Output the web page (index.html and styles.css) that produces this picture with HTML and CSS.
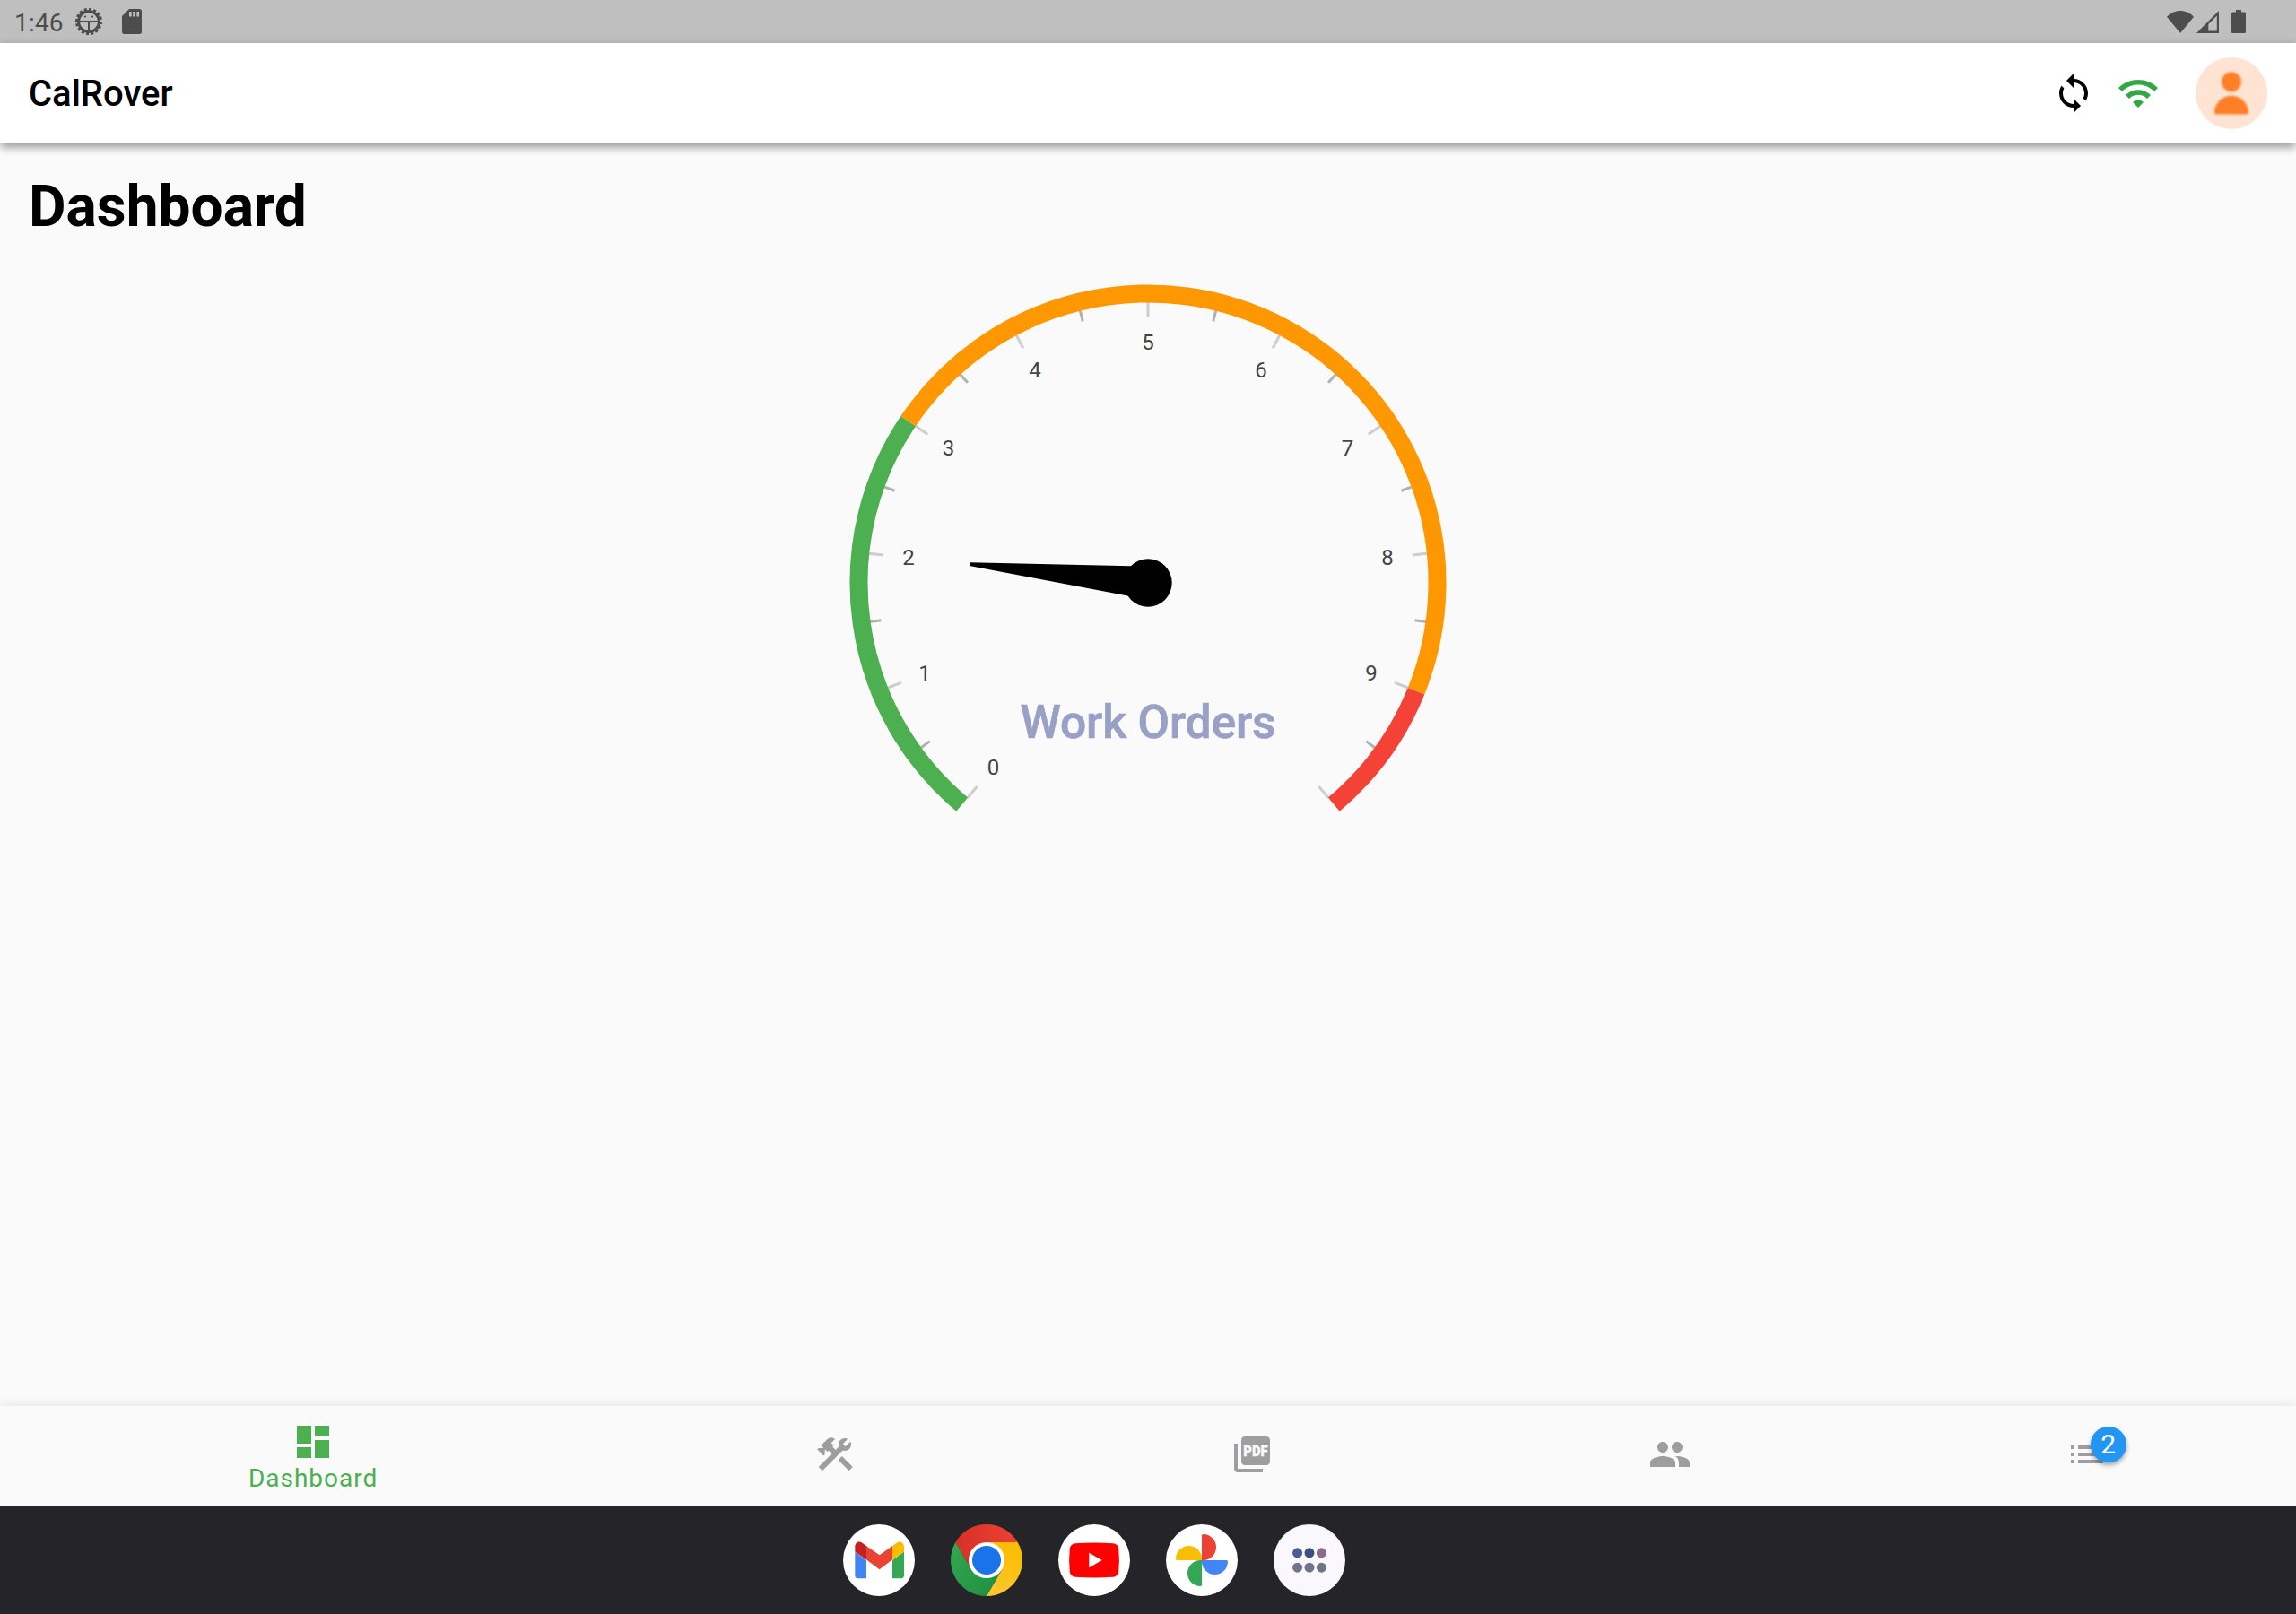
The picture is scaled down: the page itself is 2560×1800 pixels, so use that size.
FILE: index.html
```html
<!DOCTYPE html>
<html lang="en">
<head>
<meta charset="utf-8">
<title>CalRover</title>
<link rel="stylesheet" href="styles.css">
</head>
<body>
<div class="screen">
  <div class="status-bar">
    <span class="clock">1:46</span>
    <svg class="status-gear" viewBox="-16 -16 32 32">
      <circle class="gear-ring" r="11.500"/>
      <circle class="gear-teeth" r="13.600" pathLength="64"/>
      <path class="gear-lines" d="M-11 0H11M0 0V11"/>
      <circle cx="-4" cy="-5.500" r="1.100"/><circle cx="4" cy="-5.500" r="1.100"/>
    </svg>
    <svg class="status-card" viewBox="0 0 22 28"><path fill-rule="evenodd" d="M8 0H19.500A2.500 2.500 0 0 1 22 2.500V25.500A2.500 2.500 0 0 1 19.500 28H2.500A2.500 2.500 0 0 1 0 25.500V8ZM8 3V8.500H10.700V3ZM12.200 3V8.500H14.900V3ZM16.400 3V8.500H19V3Z"/></svg>
    <div class="status-right">
      <svg class="status-wifi" viewBox="0 0 30 25"><path d="M15 25L0 6.800C8-2.200 22-2.200 30 6.800Z"/></svg>
      <svg class="status-signal" viewBox="0 0 25 25"><path fill-rule="evenodd" d="M25 0V25H0ZM22.800 5.400L13.300 14.900V22.600H22.800Z"/></svg>
      <svg class="status-battery" viewBox="0 0 16 26"><path d="M5 0H11V2.500H14.500A1.500 1.500 0 0 1 16 4V24.500A1.500 1.500 0 0 1 14.500 26H1.500A1.500 1.500 0 0 1 0 24.500V4A1.500 1.500 0 0 1 1.500 2.500H5Z"/></svg>
    </div>
  </div>

  <header class="app-bar">
    <span class="app-title">CalRover</span>
    <div class="app-actions">
      <svg class="icon" viewBox="0 0 24 24"><path d="M12 4V1L8 5l4 4V6c3.310 0 6 2.690 6 6 0 1.010-.25 1.970-.7 2.800l1.460 1.460C19.540 15.030 20 13.570 20 12c0-4.420-3.580-8-8-8zm0 14c-3.310 0-6-2.690-6-6 0-1.010.25-1.970.7-2.800L5.240 7.740C4.460 8.970 4 10.430 4 12c0 4.420 3.580 8 8 8v3l4-4-4-4v3z"/></svg>
      <svg class="icon icon-online" viewBox="0 0 24 24"><path d="M1 9l2 2c4.970-4.970 13.030-4.970 18 0l2-2C16.930 2.930 7.080 2.930 1 9zm8 8l3 3 3-3c-1.650-1.660-4.340-1.660-6 0zm-4-4l2 2c2.760-2.760 7.240-2.760 10 0l2-2C15.140 9.140 8.870 9.140 5 13z"/></svg>
      <svg class="avatar" viewBox="0 0 80 80">
        <circle class="avatar-bg" cx="40" cy="40" r="40"/>
        <g class="avatar-person"><circle cx="40" cy="27.200" r="11"/><path d="M21 61V59.500C22.500 50 30 42.700 40 42.700S57.500 50 59 59.500V61Q59 63.500 56.500 63.500H23.500Q21 63.500 21 61Z"/></g>
      </svg>
    </div>
  </header>

  <main class="content">
    <h1 class="page-title">Dashboard</h1>
    <svg class="gauge" viewBox="-340 -340 680 680">
      <g class="major">
        <path d="M296.500 0H313" transform="rotate(130)"/><path d="M296.500 0H313" transform="rotate(158)"/>
        <path d="M296.500 0H313" transform="rotate(186)"/><path d="M296.500 0H313" transform="rotate(214)"/>
        <path d="M296.500 0H313" transform="rotate(242)"/><path d="M296.500 0H313" transform="rotate(270)"/>
        <path d="M296.500 0H313" transform="rotate(298)"/><path d="M296.500 0H313" transform="rotate(326)"/>
        <path d="M296.500 0H313" transform="rotate(354)"/><path d="M296.500 0H313" transform="rotate(22)"/>
        <path d="M296.500 0H313" transform="rotate(50)"/>
      </g>
      <g class="minor">
        <path d="M300.500 0H313" transform="rotate(144)"/><path d="M300.500 0H313" transform="rotate(172)"/>
        <path d="M300.500 0H313" transform="rotate(200)"/><path d="M300.500 0H313" transform="rotate(228)"/>
        <path d="M300.500 0H313" transform="rotate(256)"/><path d="M300.500 0H313" transform="rotate(284)"/>
        <path d="M300.500 0H313" transform="rotate(312)"/><path d="M300.500 0H313" transform="rotate(340)"/>
        <path d="M300.500 0H313" transform="rotate(8)"/><path d="M300.500 0H313" transform="rotate(36)"/>
      </g>
      <path class="range range-low" d="M-207.300 247.050A322.500 322.500 0 0 1 -267.370 -180.340"/>
      <path class="range range-mid" d="M-267.370 -180.340A322.500 322.500 0 0 1 299.020 120.810"/>
      <path class="range range-high" d="M299.020 120.810A322.500 322.500 0 0 1 207.300 247.050"/>
      <g class="labels">
        <text x="-172.600" y="214.200">0</text><text x="-249" y="109.100">1</text><text x="-267" y="-19.600">2</text>
        <text x="-222.600" y="-141.600">3</text><text x="-126.100" y="-228.600">4</text><text x="0" y="-260">5</text>
        <text x="126.100" y="-228.600">6</text><text x="222.600" y="-141.600">7</text><text x="267" y="-19.600">8</text>
        <text x="249" y="109.100">9</text>
      </g>
      <text class="gauge-title" x="0" y="173" textLength="285" lengthAdjust="spacing">Work Orders</text>
      <path d="M0 -18.400L200 -1.900V1.900L0 18.400Z" transform="rotate(186)"/>
      <circle r="26.700"/>
    </svg>
  </main>

  <nav class="bottom-nav">
    <div class="nav-item active">
      <svg class="icon" viewBox="0 0 24 24"><path d="M3 13h8V3H3v10zm0 8h8v-6H3v6zm10 0h8V11h-8v10zm0-18v6h8V3h-8z"/></svg>
      <span class="nav-label">Dashboard</span>
    </div>
    <div class="nav-item">
      <svg class="icon" viewBox="0 0 24 24"><rect height="8.480" transform="matrix(0.7071 -0.7071 0.7071 0.7071 -6.8717 17.6255)" width="3" x="16.340" y="12.870"/><path d="M17.500 10c1.930 0 3.500-1.570 3.500-3.500 0-.58-.16-1.120-.41-1.600l-2.700 2.700-1.490-1.490 2.700-2.700c-.48-.25-1.020-.41-1.600-.41C15.570 3 14 4.570 14 6.500c0 .41.08.8.21 1.160l-1.850 1.850-1.780-1.780.71-.71-1.410-1.410L12 3.490a3 3 0 0 0-4.240 0L4.220 7.030l1.410 1.410H2.810l-.71.71 3.540 3.540.71-.71V9.150l1.410 1.410.71-.71 1.780 1.780-7.410 7.410 2.120 2.120L16.340 9.790c.36.130.75.210 1.160.210z"/></svg>
    </div>
    <div class="nav-item">
      <svg class="icon" viewBox="0 0 24 24"><path d="M20 2H8c-1.100 0-2 .9-2 2v12c0 1.100.9 2 2 2h12c1.100 0 2-.9 2-2V4c0-1.100-.9-2-2-2zM4 6H2v14c0 1.100.9 2 2 2h14v-2H4V6z"/><text class="pdf-text" x="7.100" y="12.900" textLength="13.800" lengthAdjust="spacingAndGlyphs">PDF</text></svg>
    </div>
    <div class="nav-item">
      <svg class="icon" viewBox="0 0 24 24"><path d="M16 11c1.660 0 2.990-1.340 2.990-3S17.660 5 16 5c-1.660 0-3 1.340-3 3s1.340 3 3 3zm-8 0c1.660 0 2.990-1.340 2.990-3S9.660 5 8 5C6.340 5 5 6.340 5 8s1.340 3 3 3zm0 2c-2.330 0-7 1.170-7 3.500V19h14v-2.500c0-2.330-4.670-3.500-7-3.500zm8 0c-.29 0-.62.020-.97.050 1.160.84 1.970 1.970 1.970 3.450V19h6v-2.500c0-2.330-4.670-3.500-7-3.500z"/></svg>
    </div>
    <div class="nav-item">
      <div class="badged">
        <svg class="icon" viewBox="0 0 24 24"><path d="M3 13h2v-2H3v2zm0 4h2v-2H3v2zm0-8h2V7H3v2zm4 4h14v-2H7v2zm0 4h14v-2H7v2zM7 7v2h14V7H7z"/></svg>
        <span class="badge">2</span>
      </div>
    </div>
  </nav>

  <footer class="taskbar">
    <svg class="app-icon" viewBox="-40 -40 80 80">
      <circle r="40" fill="#fff"/>
      <path fill="#4285f4" d="M-26.700 -9.500L-14 0V20.200H-23.500A3.200 3.200 0 0 1 -26.700 17Z"/>
      <path fill="#34a853" d="M28 -9.500L15 0V20.200H24.500A3.200 3.200 0 0 0 28 17Z"/>
      <path fill="#ea4335" d="M-14.200 -15.900L.6 -5.700L15.200 -15.900V-.7L.6 10.200L-14.200 -.7Z"/>
      <path fill="#c5221f" d="M-26.700 -9.500V-15C-26.700 -20 -22 -22 -18.300 -19L-14 -15.900V-.5Z"/>
      <path fill="#fbbc04" d="M28 -9.500V-15C28 -20 23 -22 19.500 -19L15 -15.900V-.5Z"/>
    </svg>
    <svg class="app-icon" viewBox="-40 -40 80 80">
      <defs>
        <linearGradient id="chrome-red" x1="0" x2="1"><stop offset="0" stop-color="#d93025"/><stop offset="1" stop-color="#ea4335"/></linearGradient>
        <linearGradient id="chrome-yellow" x1="0" y1="1" x2=".4" y2="0"><stop offset="0" stop-color="#fcc934"/><stop offset="1" stop-color="#fbbc04"/></linearGradient>
        <linearGradient id="chrome-green" x1="1" y1="1" x2="0" y2="0"><stop offset="0" stop-color="#1e8e3e"/><stop offset="1" stop-color="#34a853"/></linearGradient>
      </defs>
      <path fill="url(#chrome-red)" d="M-34.640 -20A40 40 0 0 1 34.640 -20H0L-17.320 10Z"/>
      <path fill="url(#chrome-yellow)" d="M34.640 -20A40 40 0 0 1 0 40L17.320 10L0 -20Z"/>
      <path fill="url(#chrome-green)" d="M0 40A40 40 0 0 1 -34.640 -20L-17.320 10H17.320Z"/>
      <circle r="20" fill="#fff"/><circle r="16" fill="#1a73e8"/>
    </svg>
    <svg class="app-icon" viewBox="-40 -40 80 80">
      <circle r="40" fill="#fff"/>
      <path fill="#f00" d="M-21 -18.800Q0 -20.200 21 -18.800Q26.500 -18.200 27.200 -13Q28.600 0 27.200 13Q26.500 18.200 21 18.800Q0 20.200 -21 18.800Q-26.500 18.200 -27.200 13Q-28.600 0 -27.200 -13Q-26.500 -18.200 -21 -18.800Z"/>
      <path fill="#fff" d="M-5.700 -8.300L8.700 0L-5.700 8.300Z"/>
    </svg>
    <svg class="app-icon" viewBox="-40 -40 80 80">
      <circle r="40" fill="#fff"/>
      <path fill="#ea4335" d="M0 0V-27.500Q0 -29 1.500 -29A14.500 14.500 0 0 1 1.500 0Z"/>
      <path fill="#4285f4" d="M0 0H27.500Q29 0 29 1.500A14.500 14.500 0 0 1 0 1.500Z"/>
      <path fill="#34a853" d="M0 0V27.500Q0 29 -1.500 29A14.500 14.500 0 0 1 -1.500 0Z"/>
      <path fill="#fbbc04" d="M0 0H-27.500Q-29 0 -29 -1.500A14.500 14.500 0 0 1 0 -1.500Z"/>
    </svg>
    <svg class="app-icon" viewBox="-40 -40 80 80">
      <circle r="40" fill="#faf8fd"/>
      <circle cx="-13.400" cy="-8.200" r="5.500" fill="#495d92"/><circle cy="-8.200" r="5.500" fill="#3c4f85"/><circle cx="13.400" cy="-8.200" r="5.500" fill="#8c6a8a"/>
      <circle cx="-13.400" cy="8.200" r="5.500" fill="#6f7488"/><circle cy="8.200" r="5.500" fill="#6f7488"/><circle cx="13.400" cy="8.200" r="5.500" fill="#6f7488"/>
    </svg>
  </footer>
</div>
</body>
</html>
```
FILE: styles.css
```css
* { box-sizing: border-box; }
body { margin: 0; font-family: Roboto, "Liberation Sans", sans-serif; color: #000; }
svg { display: block; flex: none; }

.screen {
  width: 2560px;
  height: 1800px;
  display: grid;
  grid-template-rows: 48px 112px 1fr 112px 120px;
  background: #fafafa;
  overflow: hidden;
}

/* System status bar */
.status-bar {
  display: flex;
  align-items: center;
  padding: 0 56px 0 16px;
  background: #bfbfbf;
  color: #4d4d4d;
  fill: #4d4d4d;
}
.clock { font-size: 28px; line-height: 48px; width: 67px; padding-top: 3px; letter-spacing: .2px; }
.status-gear { width: 32px; height: 32px; }
.gear-ring { fill: none; stroke: #4d4d4d; stroke-width: 3; }
.gear-teeth { fill: none; stroke: #4d4d4d; stroke-width: 3; stroke-dasharray: 2.200 1.800; }
.gear-lines { fill: none; stroke: #4d4d4d; stroke-width: 2; }
.status-card { width: 22px; height: 28px; margin-left: 21px; }
.status-right { display: flex; align-items: center; margin-left: auto; }
.status-wifi { width: 30px; height: 25px; }
.status-signal { width: 25px; height: 25px; margin: 1px 0 0 2.500px; }
.status-battery { width: 16px; height: 26px; margin-left: 14.500px; }

/* Application bar */
.app-bar {
  display: flex;
  align-items: center;
  justify-content: space-between;
  padding: 0 32px;
  background: #fff;
  box-shadow: 0 5px 10px -1px rgba(0, 0, 0, .3), 0 3px 10px rgba(0, 0, 0, .15);
  z-index: 1;
}
.app-title { font-size: 40px; font-weight: 500; line-height: 48px; padding-top: 2px; }
.app-actions { display: flex; align-items: center; gap: 24px; }
.icon { width: 48px; height: 48px; fill: currentColor; }
.icon-online { color: #31a745; }
.avatar { width: 80px; height: 80px; margin-left: 16px; }
.avatar-bg { fill: #ffe4d3; }
.avatar-person { fill: #ff7f27; filter: blur(.8px); }

/* Dashboard page */
.content { display: flex; flex-direction: column; align-items: center; padding: 33px 32px 0; }
.page-title { align-self: flex-start; margin: 0; font-size: 64px; font-weight: 700; line-height: 75px; }
.gauge { width: 680px; height: 680px; margin-top: 42px; }
.major { stroke: #cdcdcd; stroke-width: 3; }
.minor { stroke: #b1b1b1; stroke-width: 3; }
.range { fill: none; stroke-width: 20; }
.range-low { stroke: #4caf50; }
.range-mid { stroke: #ff9800; }
.range-high { stroke: #f44336; }
.labels { font-size: 24px; fill: #444; text-anchor: middle; }
.gauge-title { font-size: 51.500px; font-weight: 500; fill: #98a0c6; stroke: #98a0c6; stroke-width: .7; text-anchor: middle; }

/* Bottom navigation */
.bottom-nav {
  display: flex;
  background: #fafafa;
  color: #9e9e9e;
  box-shadow: 0 0 12px rgba(0, 0, 0, .1);
}
.nav-item { flex: 1; display: flex; flex-direction: column; align-items: center; justify-content: center; padding-bottom: 4px; }
.nav-item.active { flex: 1.500; color: #4caf50; padding: 0; }
.nav-label { font-size: 28px; line-height: 30px; padding-top: 2px; letter-spacing: 1px; }
.pdf-text { font-size: 8.600px; font-weight: 900; fill: #fafafa; stroke: #fafafa; stroke-width: .15; }
.badged { position: relative; }
.badge {
  position: absolute;
  left: 28px;
  top: -7px;
  width: 40px;
  height: 40px;
  border-radius: 50%;
  background: #2196f3;
  color: #fff;
  font-size: 30px;
  line-height: 40px;
  padding-right: 1px;
  text-align: center;
  box-shadow: 0 3px 5px rgba(0, 0, 0, .35);
}

/* System taskbar */
.taskbar { display: flex; align-items: center; gap: 40px; padding-left: 940px; background: #252429; z-index: 1; }
.app-icon { width: 80px; height: 80px; }
```
